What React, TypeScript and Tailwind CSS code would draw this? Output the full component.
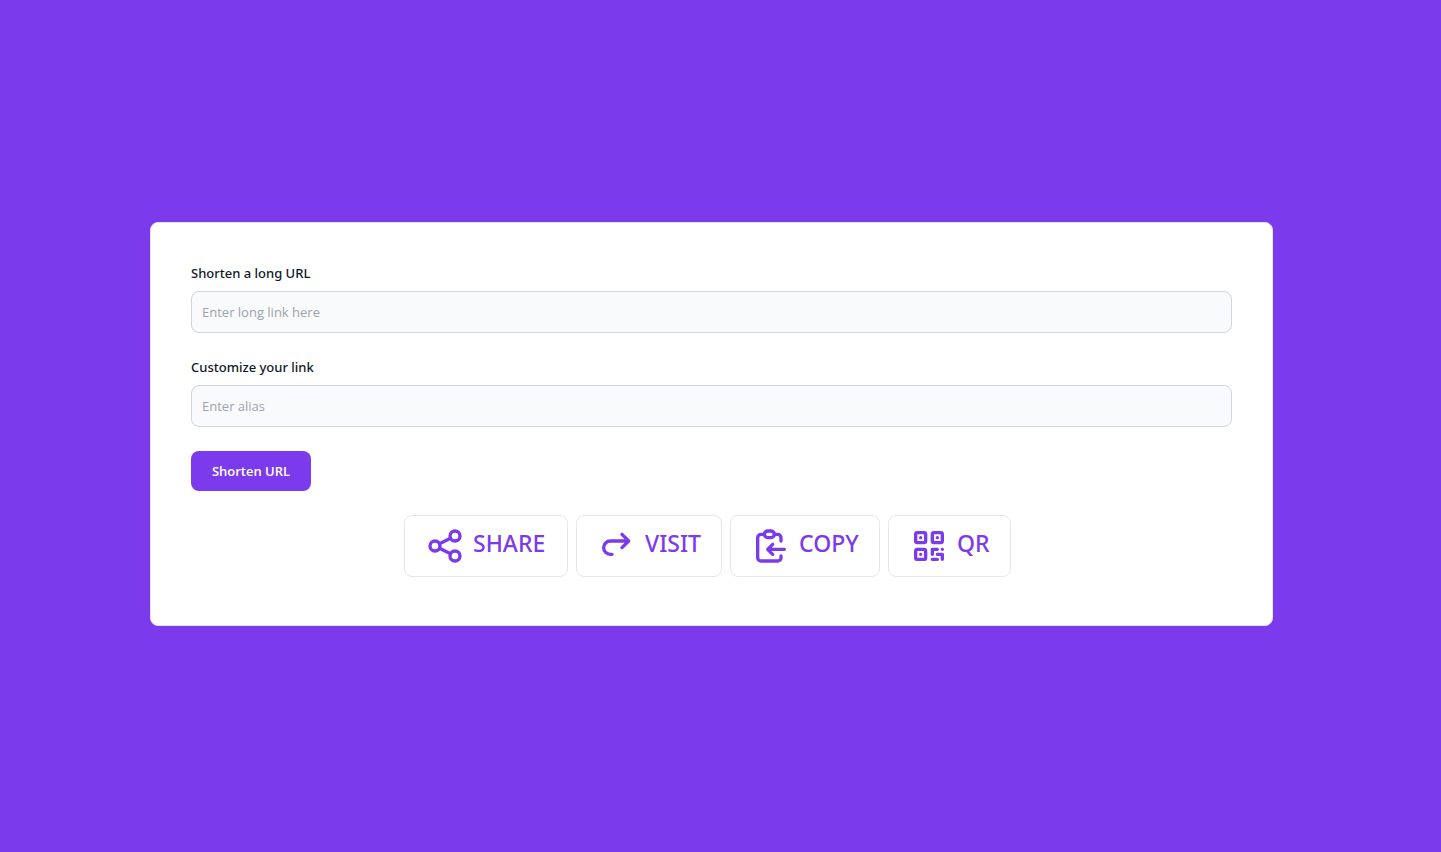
import type { ReactNode } from "react";

function Icon({ children }: { children: ReactNode }) {
  return (
    <svg
      className="size-10 shrink-0"
      viewBox="0 0 24 24"
      fill="none"
      stroke="currentColor"
      strokeWidth="2"
      strokeLinecap="round"
      strokeLinejoin="round"
      aria-hidden="true"
    >
      {children}
    </svg>
  );
}

const actions = [
  {
    label: "SHARE",
    width: "min-w-[164px]",
    icon: (
      <Icon>
        <circle cx="6" cy="12" r="3" />
        <circle cx="18" cy="6" r="3" />
        <circle cx="18" cy="18" r="3" />
        <path d="M8.7 10.7l6.6-3.4M8.7 13.3l6.6 3.4" />
      </Icon>
    ),
  },
  {
    label: "VISIT",
    width: "min-w-[146px]",
    icon: (
      <Icon>
        <path d="M15 13l4-4-4-4M19 9H8a4 4 0 0 0 0 8h1" />
      </Icon>
    ),
  },
  {
    label: "COPY",
    width: "min-w-[150px]",
    icon: (
      <Icon>
        <path d="M8 5H6a2 2 0 0 0-2 2v12a2 2 0 0 0 2 2h10a2 2 0 0 0 2-2v-1" />
        <path d="M14 5h2a2 2 0 0 1 2 2v2" />
        <rect x="8" y="3" width="6" height="4" rx="2" />
        <path d="M20 14H10M13 11l-3 3 3 3" />
      </Icon>
    ),
  },
  {
    label: "QR",
    width: "min-w-[123px]",
    icon: (
      <Icon>
        <rect x="4" y="4" width="6" height="6" rx="1" />
        <rect x="14" y="4" width="6" height="6" rx="1" />
        <rect x="4" y="14" width="6" height="6" rx="1" />
        <path d="M7 7v.01M17 7v.01M7 17v.01M14 14h3M20 14v.01M14 14v3M14 20h3M17 17h3M20 17v3" />
      </Icon>
    ),
  },
];

function Field({ id, label, placeholder }: { id: string; label: string; placeholder: string }) {
  return (
    <div className="mb-6">
      <label
        htmlFor={id}
        className="mb-2 block font-['Noto_Sans',sans-serif] text-[13px] leading-5 font-medium text-gray-900"
      >
        {label}
      </label>
      <input
        id={id}
        type="text"
        placeholder={placeholder}
        className="block w-full rounded-lg border border-[#d1d5db] bg-[#f9fafb] p-2.5 text-[13px] leading-5 text-gray-900 placeholder:text-[#9ca3af]"
      />
    </div>
  );
}

export default function App() {
  return (
    <main className="flex min-h-screen items-center bg-[#7c3aed] pr-[168px] pb-1 pl-[150px] font-['Open_Sans','Noto_Sans',sans-serif]">
      <form
        className="w-full rounded-lg border border-[#e5e7eb] bg-white p-10"
        onSubmit={(event) => event.preventDefault()}
      >
        <Field id="long-url" label="Shorten a long URL" placeholder="Enter long link here" />
        <Field id="alias" label="Customize your link" placeholder="Enter alias" />
        <button
          type="submit"
          className="mb-6 block min-w-[120px] rounded-lg bg-[#7c3aed] px-5 py-2.5 text-[13px] leading-5 font-semibold text-white"
        >
          Shorten URL
        </button>
        <div className="flex flex-wrap justify-center">
          {actions.map((action) => (
            <button
              key={action.label}
              type="button"
              className={`mr-2 mb-2 flex items-start gap-2 rounded-lg border border-[#e5e7eb] bg-white py-2.5 pr-4 pl-5 font-['Noto_Sans',sans-serif] text-[23px] leading-[34px] font-medium text-[#7c3aed] ${action.width}`}
            >
              {action.icon}
              {action.label}
            </button>
          ))}
        </div>
      </form>
    </main>
  );
}
